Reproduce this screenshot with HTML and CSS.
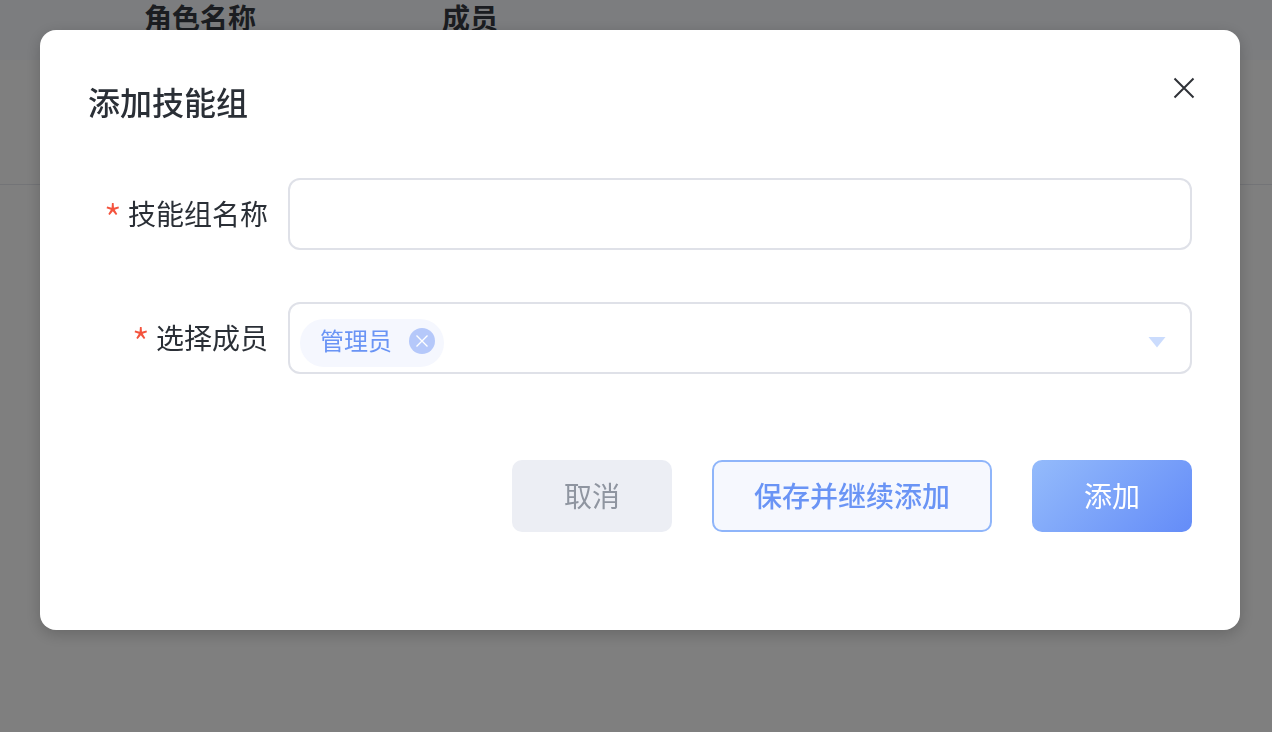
FILE: index.html
```html
<!DOCTYPE html>
<html lang="zh-CN">
<head>
<meta charset="utf-8">
<title>添加技能组</title>
<link rel="stylesheet" href="styles.css">
</head>
<body>
<div class="page">
  <div class="table-head">
    <span class="col col-role">角色名称</span>
    <span class="col col-member">成员</span>
  </div>
  <div class="table-row"></div>
</div>
<div class="overlay"></div>
<div class="modal">
  <h2 class="modal-title">添加技能组</h2>
  <button class="close" aria-label="关闭">
    <svg width="22" height="22" viewBox="0 0 22 22"><path d="M1.5 1.5 20.5 20.5M20.5 1.5 1.5 20.5" stroke="#2f3237" stroke-width="2" fill="none"/></svg>
  </button>
  <div class="form">
    <div class="field">
      <label class="label"><span class="req">*</span>技能组名称</label>
      <div class="control"></div>
    </div>
    <div class="field">
      <label class="label"><span class="req">*</span>选择成员</label>
      <div class="control control-select">
        <span class="tag">
          <span class="tag-text">管理员</span>
          <span class="tag-x">
            <svg width="14" height="14" viewBox="0 0 14 14"><path d="M1.5 1.5 12.5 12.5M12.5 1.5 1.5 12.5" stroke="#fff" stroke-width="1.4" fill="none"/></svg>
          </span>
        </span>
        <svg class="caret" width="18" height="12" viewBox="0 0 18 12"><path d="M0.5 1H17.5L9 11.5Z" fill="#cbdcfd"/></svg>
      </div>
    </div>
  </div>
  <div class="actions">
    <button class="btn btn-cancel">取消</button>
    <button class="btn btn-save">保存并继续添加</button>
    <button class="btn btn-add">添加</button>
  </div>
</div>
</body>
</html>
```
FILE: styles.css
```css
* { box-sizing: border-box; }
html, body { margin: 0; height: 100%; overflow: hidden; }
body {
  font-family: "Noto Sans CJK SC", "Noto Sans", sans-serif;
  background: #fff;
  color: #2a2f36;
}
.table-head {
  height: 60px;
  background: #f9fafe;
  display: flex;
  font-size: 28px;
  font-weight: 700;
  line-height: 34px;
  color: #363a42;
}
.col { display: block; }
.col-role { margin-left: 144px; width: 298px; }
.table-row { height: 125px; border-bottom: 1px solid #e6e8ee; }
.overlay {
  position: fixed;
  inset: 0;
  background: rgba(0, 0, 0, .5);
}
.modal {
  position: fixed;
  left: 40px;
  top: 30px;
  width: 1200px;
  height: 600px;
  background: #fff;
  border-radius: 16px;
  box-shadow: 0 4px 16px rgba(0, 0, 0, .2);
  padding: 48px;
}
.modal-title {
  margin: 0;
  font-size: 32px;
  line-height: 46px;
  font-weight: 500;
  color: #2a2f36;
}
.close {
  position: absolute;
  right: 45px;
  top: 47px;
  width: 22px;
  height: 22px;
  padding: 0;
  border: 0;
  background: none;
  display: block;
}
.close svg { display: block; }
.form {
  margin-top: 54px;
  display: flex;
  flex-direction: column;
  gap: 52px;
}
.field { display: flex; align-items: center; }
.label {
  width: 200px;
  padding: 0 20px 2px 0;
  text-align: right;
  font-size: 28px;
  line-height: 40px;
  color: #2a2f36;
  white-space: nowrap;
}
.req {
  color: #f4533d;
  font-size: 42px;
  font-weight: 300;
  line-height: 0;
  vertical-align: -11px;
  margin-right: 6px;
}
.control {
  flex: 1;
  height: 72px;
  border: 2px solid #dfe1e8;
  border-radius: 12px;
  background: #fff;
}
.control-select {
  display: flex;
  align-items: center;
  justify-content: space-between;
  padding: 0 24px 0 10px;
}
.tag {
  height: 48px;
  margin-top: 10px;
  border-radius: 24px;
  background: #f5f7fe;
  display: flex;
  align-items: center;
  padding: 0 9px 4px 20px;
  gap: 17px;
}
.tag-text { font-size: 24px; line-height: 34px; margin-bottom: 2px; color: #6a94f5; }
.tag-x {
  width: 26px;
  height: 26px;
  border-radius: 50%;
  background: #b5c8fa;
  display: flex;
  align-items: center;
  justify-content: center;
}
.tag-x svg { display: block; }
.caret { display: block; margin-top: 8px; }
.actions {
  margin-top: 86px;
  display: flex;
  justify-content: flex-end;
  gap: 40px;
}
.btn {
  height: 72px;
  border: 0;
  border-radius: 10px;
  font-family: inherit;
  font-size: 28px;
  line-height: 40px;
  padding: 0 0 2px;
}
.btn-cancel { width: 160px; background: #eceef4; color: #8f95a0; }
.btn-save {
  width: 280px;
  background: #f6f8fe;
  border: 2px solid #8fb5fa;
  color: #6a94f5;
  font-weight: 500;
}
.btn-add {
  width: 160px;
  background: linear-gradient(135deg, #94bbfb 0%, #648cf8 100%);
  color: #fff;
}
```
